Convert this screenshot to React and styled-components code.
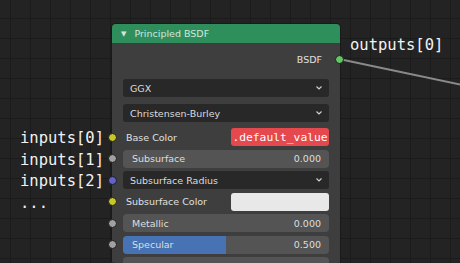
import React from 'react';
import styled, { createGlobalStyle } from 'styled-components';

const GlobalStyle = createGlobalStyle`
  html, body {
    margin: 0;
    padding: 0;
    background: #232323;
  }
  body {
    font-family: "DejaVu Sans", "Liberation Sans", sans-serif;
  }
`;

const Canvas = styled.div`
  position: relative;
  width: 460px;
  height: 263px;
  overflow: hidden;
  background-color: #232323;
  background-image:
    linear-gradient(to right, #1b1b1b 1px, transparent 1px),
    linear-gradient(to bottom, #1b1b1b 1px, transparent 1px);
  background-size: 20px 20px;
  background-position: 10px 18px;
`;

const Wire = styled.svg`
  position: absolute;
  left: 0;
  top: 0;
`;

const Node = styled.div`
  position: absolute;
  left: 112px;
  top: 24px;
  width: 228px;
  height: 260px;
  background: #3e3e3e;
  border-radius: 4px 4px 0 0;
  box-shadow: 0 0 0 1px #1a1a1a;
`;

const Header = styled.div`
  display: flex;
  align-items: center;
  gap: 8px;
  height: 19px;
  padding-left: 9px;
  background: #2e8f5d;
  border-radius: 4px 4px 0 0;
  color: #d4e6da;
  font-size: 9.5px;
`;

const Arrow = styled.span`
  font-size: 7px;
  color: #d4e6da;
`;

const Body = styled.div`
  display: flex;
  flex-direction: column;
  gap: 3.5px;
  padding: 6px 11px 0;
`;

const OutputRow = styled.div`
  position: relative;
  display: flex;
  justify-content: flex-end;
  align-items: center;
  height: 20px;
  padding-right: 7px;
  margin-bottom: 6.5px;
  color: #e0e0e0;
  font-size: 9.5px;
`;

const Socket = styled.span`
  position: absolute;
  top: 50%;
  ${p => (p.$side === 'right' ? 'right: -15px;' : 'left: -15px;')}
  width: 7px;
  height: 7px;
  margin-top: -4.5px;
  border-radius: 50%;
  background: ${p => p.$color};
  border: 1px solid #1c1c1c;
`;

const Dropdown = styled.div`
  position: relative;
  display: flex;
  align-items: center;
  justify-content: space-between;
  height: 18px;
  padding: 0 6px 0 7px;
  background: #282828;
  border-radius: 3px;
  color: #dcdcdc;
  font-size: 9.5px;
  margin-bottom: ${p => p.$mb || 0}px;
`;

const Slider = styled.div`
  position: relative;
  display: flex;
  align-items: center;
  justify-content: space-between;
  height: 18px;
  padding: 0 8px 0 9px;
  border-radius: 4px;
  background: #545454;
  color: #dedede;
  font-size: 9.5px;
`;

const Fill = styled.span`
  position: absolute;
  left: 0;
  top: 0;
  bottom: 0;
  background: #4772b3;
  border-radius: 4px 0 0 4px;
`;

const SliderText = styled.span`
  position: relative;
`;

const FieldRow = styled.div`
  position: relative;
  display: flex;
  align-items: center;
  justify-content: space-between;
  height: 18px;
  padding-left: 3px;
  color: #e0e0e0;
  font-size: 9.5px;
`;

const Swatch = styled.div`
  display: flex;
  align-items: center;
  justify-content: center;
  width: 98px;
  height: 18px;
  border-radius: 3px;
  background: ${p => p.$bg};
  color: #ffffff;
  font-family: "DejaVu Sans Mono", "Liberation Mono", monospace;
  font-size: 11.3px;
`;

const Callouts = styled.div`
  position: absolute;
  left: 20px;
  top: 128px;
  display: flex;
  flex-direction: column;
  color: #f2f2f2;
  font-family: "DejaVu Sans Mono", "Liberation Mono", monospace;
  font-size: 15.5px;
  line-height: 21.5px;
`;

const OutputLabel = styled.div`
  position: absolute;
  left: 350px;
  top: 34px;
  color: #f2f2f2;
  font-family: "DejaVu Sans Mono", "Liberation Mono", monospace;
  font-size: 15.5px;
  line-height: 22px;
`;

const Chevron = () => (
  <svg width="8" height="6" viewBox="0 0 8 6">
    <polyline points="1.5,1.5 4,4 6.5,1.5" fill="none" stroke="#cfcfcf" strokeWidth="1.2" />
  </svg>
);

const App = () => {
  return (
    <>
      <GlobalStyle />
      <Canvas>
        <Wire width="460" height="263">
          <line x1="339" y1="59" x2="462" y2="85" stroke="#8a8a8a" strokeWidth="2" />
        </Wire>
        <Node>
          <Header>
            <Arrow>▼</Arrow>
            <span>Principled BSDF</span>
          </Header>
          <Body>
            <OutputRow>
              BSDF
              <Socket $side="right" $color="#63c763" />
            </OutputRow>
            <Dropdown $mb={3.5}>
              <span>GGX</span>
              <Chevron />
            </Dropdown>
            <Dropdown $mb={2.5}>
              <span>Christensen-Burley</span>
              <Chevron />
            </Dropdown>
            <FieldRow>
              <Socket $color="#c7c729" />
              <span>Base Color</span>
              <Swatch $bg="#e5484d">.default_value</Swatch>
            </FieldRow>
            <Slider>
              <Socket $color="#a1a1a1" />
              <SliderText>Subsurface</SliderText>
              <SliderText>0.000</SliderText>
            </Slider>
            <Dropdown>
              <Socket $color="#6363c7" />
              <span>Subsurface Radius</span>
              <Chevron />
            </Dropdown>
            <FieldRow>
              <Socket $color="#c7c729" />
              <span>Subsurface Color</span>
              <Swatch $bg="#e8e8e8" />
            </FieldRow>
            <Slider>
              <Socket $color="#a1a1a1" />
              <SliderText>Metallic</SliderText>
              <SliderText>0.000</SliderText>
            </Slider>
            <Slider>
              <Fill style={{ width: '50%' }} />
              <Socket $color="#a1a1a1" />
              <SliderText>Specular</SliderText>
              <SliderText>0.500</SliderText>
            </Slider>
            <Slider>
              <Socket $color="#a1a1a1" />
              <SliderText>Specular Tint</SliderText>
              <SliderText>0.000</SliderText>
            </Slider>
          </Body>
        </Node>
        <Callouts>
          <span>inputs[0]</span>
          <span>inputs[1]</span>
          <span>inputs[2]</span>
          <span>...</span>
        </Callouts>
        <OutputLabel>outputs[0]</OutputLabel>
      </Canvas>
    </>
  );
};

export default App;
